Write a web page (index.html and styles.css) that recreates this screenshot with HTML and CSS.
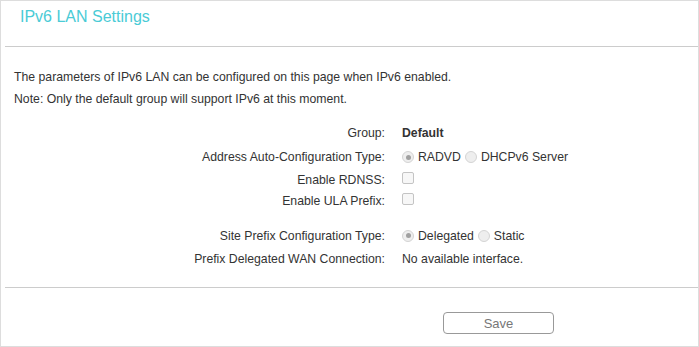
FILE: index.html
```html
<!DOCTYPE html>
<html lang="en">
<head>
  <meta charset="UTF-8">
  <title>IPv6 LAN Settings</title>
  <meta name="viewport" content="width=device-width, initial-scale=1.0">
  <link rel="stylesheet" href="styles.css">
</head>
<body>
  <div class="panel">
    <header class="panel-head">
      <h1>IPv6 LAN Settings</h1>
    </header>

    <div class="intro">
      <p>The parameters of IPv6 LAN can be configured on this page when IPv6 enabled.</p>
      <p>Note: Only the default group will support IPv6 at this moment.</p>
    </div>

    <div class="form">
      <div class="row r-group">
        <label>Group:</label>
        <div class="value"><b>Default</b></div>
      </div>
      <div class="row r-tall">
        <label>Address Auto-Configuration Type:</label>
        <div class="value">
          <span class="radio checked"></span>RADVD
          <span class="radio"></span>DHCPv6 Server
        </div>
      </div>
      <div class="row r-mid">
        <label>Enable RDNSS:</label>
        <div class="value"><span class="check"></span></div>
      </div>
      <div class="row r-low">
        <label>Enable ULA Prefix:</label>
        <div class="value"><span class="check"></span></div>
      </div>

      <div class="row gap">
        <label>Site Prefix Configuration Type:</label>
        <div class="value">
          <span class="radio checked"></span>Delegated
          <span class="radio"></span>Static
        </div>
      </div>
      <div class="row">
        <label>Prefix Delegated WAN Connection:</label>
        <div class="value">No available interface.</div>
      </div>
    </div>

    <footer class="panel-foot">
      <button class="btn">Save</button>
    </footer>
  </div>
</body>
</html>
```

FILE: styles.css
```css
* {
  margin: 0;
  padding: 0;
  box-sizing: border-box;
}

body {
  font-family: 'Liberation Sans', Arial, sans-serif;
  font-size: 12.25px;
  color: #333;
  background: #fff;
}

.panel {
  width: 699px;
  height: 347px;
  border: 1px solid #ddd;
  display: flex;
  flex-direction: column;
}

/* Header */
.panel-head {
  height: 46px;
  margin-left: 4px;
  border-bottom: 1px solid #ccc;
  padding: 7px 0 0 15px;
}

.panel-head h1 {
  font-size: 16px;
  font-weight: normal;
  color: #4acbd6;
}

/* Intro text */
.intro {
  padding: 19px 0 0 13px;
  line-height: 22px;
}

/* Form rows */
.form {
  padding-top: 11px;
}

.row {
  display: grid;
  grid-template-columns: 384px 1fr;
  align-items: center;
  height: 23px;
}

.row.r-group,
.row.r-tall {
  height: 24px;
}

.row.r-mid {
  height: 22px;
}

.row.r-low {
  height: 20px;
}

.row.gap {
  margin-top: 13px;
}

.row label {
  text-align: right;
}

.row .value {
  padding-left: 17px;
  display: flex;
  align-items: center;
}

.row b {
  font-weight: bold;
}

.radio {
  width: 12px;
  height: 12px;
  border-radius: 50%;
  border: 1px solid #d4d4d4;
  background: #eee;
  margin-right: 4px;
  position: relative;
}

.value .radio ~ .radio {
  margin-left: 4px;
}

.radio.checked::after {
  content: "";
  position: absolute;
  left: 2.5px;
  top: 2.5px;
  width: 5px;
  height: 5px;
  border-radius: 50%;
  background: #a0a0a0;
}

.check {
  width: 12px;
  height: 12px;
  border: 1px solid #c4c4c4;
  border-radius: 2px;
  background: #f7f7f7;
  margin-top: -5px;
}

/* Footer */
.panel-foot {
  margin-top: auto;
  margin-left: 4px;
  height: 59px;
  border-top: 1px solid #ccc;
  padding: 24px 0 0 438px;
}

.btn {
  width: 111px;
  height: 22px;
  border: 1px solid #999;
  border-radius: 4px;
  background: #fff;
  color: #777;
  font-family: 'Liberation Sans', Arial, sans-serif;
  font-size: 13px;
}
```
